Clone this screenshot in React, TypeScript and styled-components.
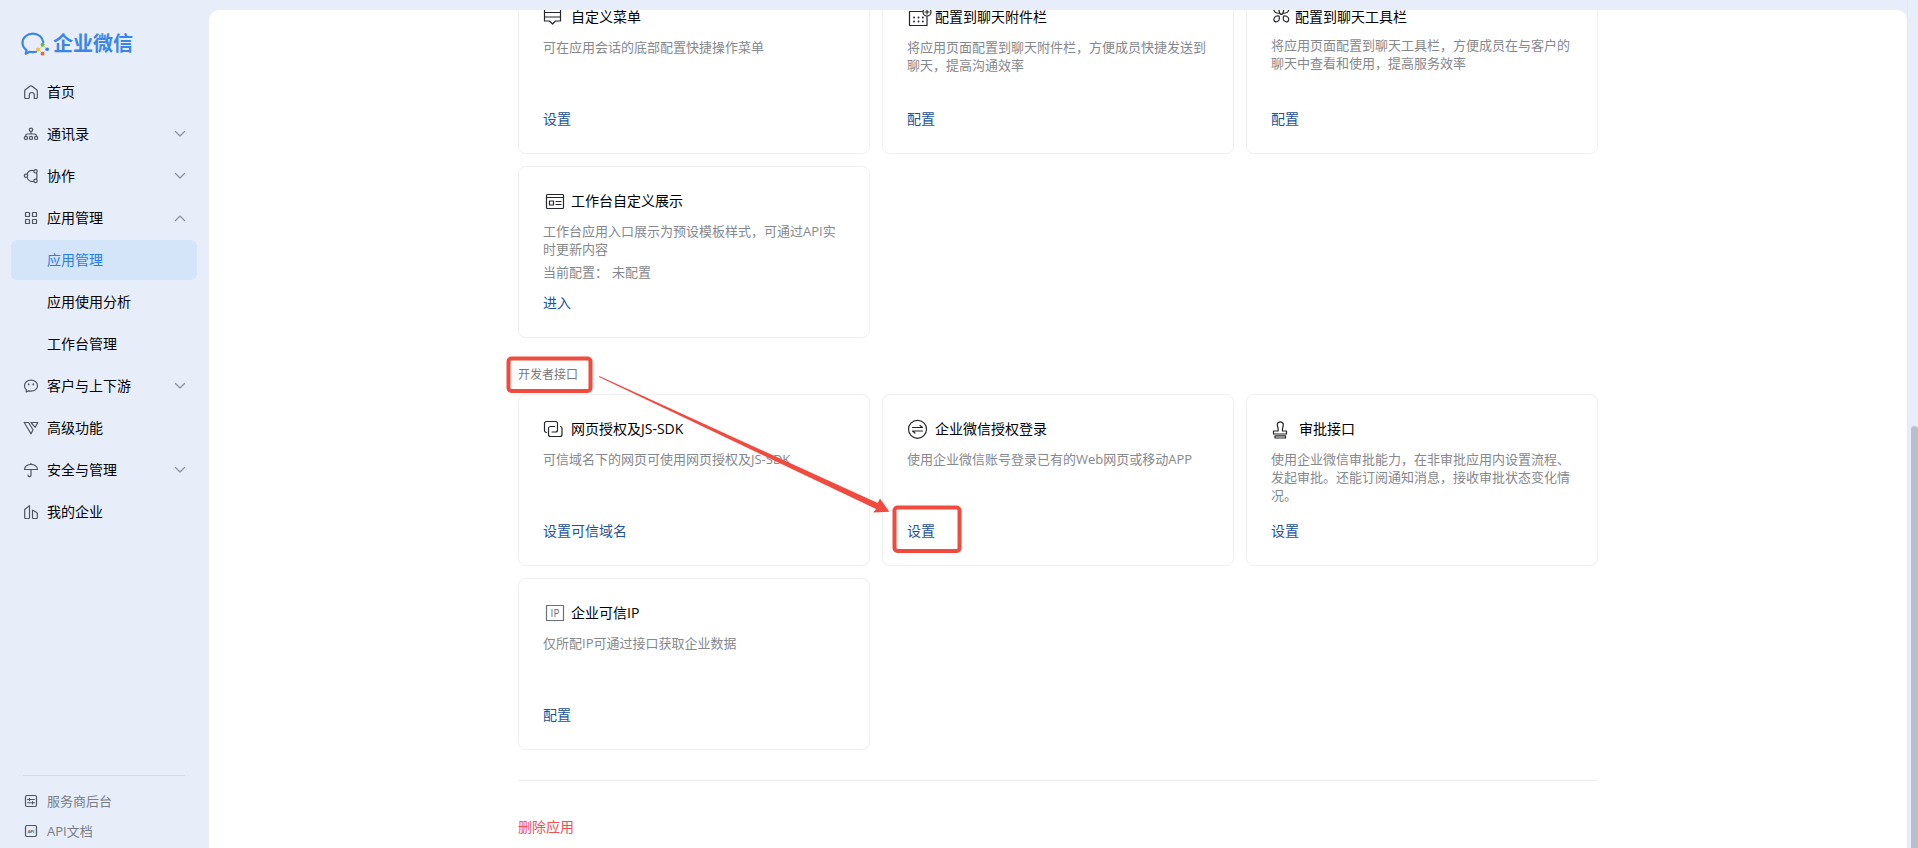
import React from 'react';
import styled, { createGlobalStyle } from 'styled-components';

const GlobalStyle = createGlobalStyle`
  * { box-sizing: border-box; }
  body {
    margin: 0;
    background: #e7eefa;
    color: #000;
    font-family: "Open Sans", "Noto Sans CJK SC", sans-serif;
    font-size: 14px;
    line-height: 20px;
  }
  button { font: inherit; color: inherit; }
`;

const Layout = styled.div`
  display: flex;
  height: 100vh;
  overflow: hidden;
`;

/* ---------- sidebar ---------- */

const Sidebar = styled.aside`
  display: flex;
  flex-direction: column;
  flex: none;
  width: 209px;
`;

const Brand = styled.a`
  display: flex;
  align-items: center;
  gap: 4px;
  height: 72px;
  padding: 15px 0 0 21px;
  color: #3b84ea;
  font-size: 20px;
  font-weight: 700;
  line-height: 28px;
  text-decoration: none;
`;

const Nav = styled.nav`
  display: flex;
  flex-direction: column;
  gap: 2px;
  padding: 0 12px 0 11px;
`;

const navRow = `
  display: flex;
  align-items: center;
  gap: 8px;
  width: 100%;
  height: 40px;
  padding: 0 12px;
  border: 0;
  border-radius: 6px;
  background: none;
  color: #000;
  text-align: left;
  text-decoration: none;
  cursor: pointer;
`;

const NavGroup = styled.button`${navRow}`;

const NavLink = styled.a<{ $active?: boolean; $nested?: boolean }>`
  ${navRow}
  ${(p) => p.$nested && 'padding-left: 36px;'}
  ${(p) => p.$active && 'background: #d4e4f9; color: #267ef0;'}
`;

const NavLabel = styled.span`
  flex: 1;
`;

const SidebarFooter = styled.div`
  display: flex;
  flex-direction: column;
  margin: auto 24px 0 23px;
  padding: 10px 0 2px;
  border-top: 1px solid #d5dce8;
`;

const FooterLink = styled.a`
  display: flex;
  align-items: center;
  gap: 8px;
  height: 30px;
  color: #787d86;
  font-size: 13px;
  text-decoration: none;
`;

const Glyph = styled.svg`
  flex: none;
  overflow: visible;
  fill: none;
  stroke: #4f555f;
  stroke-width: 1.2;
  stroke-linecap: round;
  stroke-linejoin: round;
`;

/* ---------- main panel ---------- */

const Panel = styled.main`
  flex: 1;
  min-width: 0;
  margin-top: 10px;
  overflow: hidden;
  border-radius: 10px 10px 0 0;
  background: #fff;
`;

const Content = styled.div`
  width: 100%;
  max-width: 1080px;
  margin: -28px auto 0;
`;

const CardGrid = styled.div`
  display: grid;
  grid-template-columns: repeat(3, 1fr);
  gap: 12px;
`;

const CardBox = styled.article`
  display: flex;
  flex-direction: column;
  align-items: flex-start;
  height: 172px;
  padding: 22px 24px 24px;
  border: 1px solid #eeeff0;
  border-radius: 8px;
`;

const CardTitle = styled.h3`
  display: flex;
  align-items: center;
  gap: 6px;
  height: 24px;
  margin: 0;
  font-size: 14px;
  font-weight: 400;
`;

const CardText = styled.p<{ $tight?: boolean }>`
  margin: ${(p) => (p.$tight ? 7 : 9)}px 0 0;
  color: #85888d;
  font-size: 13px;
  line-height: 18px;
`;

const CardStatus = styled.p`
  display: flex;
  gap: 4px;
  margin: 5px 0 0;
  color: #85888d;
  font-size: 13px;
  line-height: 18px;
`;

const CardLink = styled.a`
  margin-top: auto;
  color: #1d5399;
  text-decoration: none;
`;

const CardGlyph = styled(Glyph)`
  stroke: #23262b;
`;

const DeveloperSection = styled.section`
  position: relative;
  margin-top: 28px;
`;

const SectionTitle = styled.h2`
  margin: 0 0 10px;
  color: #787878;
  font-size: 12px;
  font-weight: 400;
  line-height: 18px;
`;

const Highlights = styled.svg`
  position: absolute;
  top: -16px;
  left: -18px;
  pointer-events: none;
`;

const DangerZone = styled.footer`
  display: flex;
  margin-top: 30px;
  padding: 36px 0 20px;
  border-top: 1px solid #ebecee;
`;

const DeleteButton = styled.button`
  padding: 0;
  border: 0;
  background: none;
  color: #f0504e;
  cursor: pointer;
`;

const ScrollTrack = styled.div`
  display: flex;
  flex: none;
  width: 11px;
  padding: 426px 0 0 3px;
  border-left: 1px solid #e1e8f5;
`;

const ScrollThumb = styled.div`
  flex: 1;
  border-radius: 4px 4px 0 0;
  background: #b9c0c9;
`;

/* ---------- icons ---------- */

const LogoMark = () => (
  <svg width="28" height="24" viewBox="0 0 28 24" fill="none">
    <path
      d="M22.3 10.2C21.6 5.2 17.2 1.6 12 1.6 6.2 1.6 1.5 5.6 1.500 10.800c0 3 1.500 5.600 4 7.300l-.8 3.700 3.900-2c2 .5 4.300.5 6.500 0"
      stroke="#3b84ea"
      strokeWidth="2.200"
      strokeLinejoin="round"
      strokeLinecap="round"
    />
    <path d="M22.500 13.500l3.500 3.700-4.500 4.300-4-4z" stroke="#c5d68c" strokeWidth="1" />
    <circle cx="21.500" cy="12.700" r="1.900" fill="#5cb93c" />
    <circle cx="26.200" cy="17.300" r="1.800" fill="#2f7de6" />
    <circle cx="21.500" cy="21.700" r="1.900" fill="#f0602c" />
    <circle cx="17" cy="17.500" r="1.900" fill="#fbc02d" />
  </svg>
);

const Icon16 = ({ children }: { children: React.ReactNode }) => (
  <Glyph width="16" height="16" viewBox="0 0 16 16" aria-hidden="true">{children}</Glyph>
);

const ChevronGlyph = styled(Glyph)`
  stroke: #8b919b;
`;

const Chevron = ({ up }: { up?: boolean }) => (
  <ChevronGlyph width="10" height="6" viewBox="0 0 10 6" aria-hidden="true">
    <path d={up ? 'M.5 5.500 5 1l4.500 4.500' : 'M.5.5 5 5 9.500.5'} />
  </ChevronGlyph>
);

const navIcons = {
  home: <Icon16><path d="M4.700 14.500H2.700a1 1 0 0 1-1-1V7c0-.5.2-.9.600-1.200L7.300 2a1.200 1.200 0 0 1 1.400 0l5 3.800c.4.300.6.7.6 1.200v6.500a1 1 0 0 1-1 1h-2V11a2.500 2.500 0 0 0-5 0v2.500a1 1 0 0 1-1 1z" /></Icon16>,
  contacts: (
    <Icon16>
      <circle cx="8" cy="3.800" r="1.700" />
      <path d="M8 5.500v2.500M2.700 10V9.500C2.700 8.600 3.300 8 4.200 8h7.600c.9 0 1.500.6 1.500 1.500v.5" />
      <circle cx="2.900" cy="11.900" r="1.600" /><circle cx="8" cy="11.900" r="1.600" /><circle cx="13.100" cy="11.900" r="1.600" />
    </Icon16>
  ),
  collab: (
    <Icon16>
      <circle cx="3" cy="7.800" r="1.700" /><circle cx="12.500" cy="3.300" r="1.700" /><circle cx="12.500" cy="12.900" r="1.700" />
      <path d="M4 6.200A6 6 0 0 1 10.800 2.600M4 9.400a6 6 0 0 0 6.800 4M13.600 5.200c.5 1.800.5 3.900 0 5.700" />
    </Icon16>
  ),
  apps: (
    <Icon16>
      <rect x="2.500" y="2.500" width="4" height="4" rx=".6" /><rect x="9.500" y="2.500" width="4" height="4" rx=".6" />
      <rect x="2.500" y="9.500" width="4" height="4" rx=".6" /><rect x="9.500" y="9.500" width="4" height="4" rx=".6" />
    </Icon16>
  ),
  customers: (
    <Icon16>
      <path d="M8 2.200c3.700 0 6.500 2.400 6.500 5.500S11.700 13.200 8 13.200c-.8 0-1.600-.1-2.300-.3L3.200 14l.1-2.300A5.200 5.200 0 0 1 1.500 7.700c0-3.100 2.800-5.500 6.500-5.500z" />
      <path d="M5.700 6v.7M10.300 6v.7" strokeWidth="1.600" />
    </Icon16>
  ),
  advanced: <Icon16><path d="M1.200 2.500h4.300L10 9.800l-2 4zM8 2.500h6.800L12.200 7.300zM1.200 2.500 8 13.800l2-4" /></Icon16>,
  security: <Icon16><path d="M1.500 7.500C1.700 4.500 4.500 2.300 8 2.300s6.300 2.200 6.500 5.200zM8 1.300v1M8 7.500V13c0 1-.6 1.600-1.500 1.600S5 14 5 13.200" /></Icon16>,
  company: <Icon16><path d="M2.500 14.500a.8.8 0 0 1-.8-.8V5.500L6.500 1.600v12.100c0 .5-.3.800-.8.8zM9.500 6.200l3.800 2c.6.300 1 .8 1 1.500v4c0 .5-.3.800-.8.8h-3.200a.8.8 0 0 1-.8-.8z" /></Icon16>,
};

const CardIcon = ({ width = 22, children }: { width?: number; children: React.ReactNode }) => (
  <CardGlyph width={width} height="24" viewBox={`0 0 ${width} 24`} aria-hidden="true">{children}</CardGlyph>
);

const cardIcons = {
  menu: <CardIcon><path d="M1.500 2.500h16v13.500h-5L9.500 19 6.500 16h-5zM1.500 7.500h16M1.500 12h16" /></CardIcon>,
  attach: (
    <CardIcon>
      <path d="M15.500 6.500h-13v14h17.500v-9" />
      <circle cx="20" cy="7" r="4" /><path d="M20 5v4M18 7h4" />
      <path d="M7 12.500h.1M11.500 12.500h.1M15.800 12.500h.1M7 16.500h.1M11.500 16.500h.1M15.800 16.500h.1" strokeWidth="1.800" />
    </CardIcon>
  ),
  tools: (
    <CardIcon width={18}>
      <path d="M10.300 9.500C8.500 9.500 8.500 7.500 8 5.500 7.500 3 5 1.700 3.500 3.200S3.500 7.500 6 8c2 .4 4.300.3 4.300 1.500zM10.300 9.500c1.800 0 1.800-2 2.300-4 .5-2.500 3-3.800 4.500-2.300S17.100 7.500 14.600 8c-2 .4-4.300.3-4.300 1.500zM8 11c-1.500-.3-3.500.2-4.500 1.500s-.7 3.500.6 4.100 3.300-.2 3.900-1.600c.5-1.300.4-2.700 0-4zM12.600 11c1.500-.3 3.500.2 4.500 1.500s.7 3.500-.6 4.100-3.300-.2-3.900-1.600c-.5-1.300-.4-2.700 0-4z" />
    </CardIcon>
  ),
  workbench: (
    <CardIcon>
      <rect x="3.500" y="5.500" width="17" height="14" rx="1" />
      <path d="M3.500 8.500h17M13 12.500h5M13 15.500h5" /><rect x="6.500" y="12" width="4" height="4" />
    </CardIcon>
  ),
  web: (
    <CardIcon>
      <path d="M3.500 15.500a2 2 0 0 1-2-2v-7a2 2 0 0 1 2-2h9a2 2 0 0 1 2 2v6.500a2 2 0 0 1-2 2H9" />
      <path d="M11.500 9.500H7.500a2 2 0 0 0-2 2v6a2 2 0 0 0 2 2h9.500a2 2 0 0 0 2-2v-6a2 2 0 0 0-1.500-2" />
    </CardIcon>
  ),
  login: (
    <CardIcon>
      <circle cx="10.500" cy="12.300" r="9" />
      <path d="M5.500 10.500h10L13 8.500M15.500 14h-10l2.500 2" />
    </CardIcon>
  ),
  stamp: (
    <CardIcon>
      <path d="M7.200 14c.3-3-.9-4-.9-6.800a3.100 3.100 0 0 1 6 0c0 2.800-1.200 3.800-.9 6.800h4.100v3h-13v-3zM4 18.800h10.500v2.200H4z" />
    </CardIcon>
  ),
  ip: (
    <CardIcon>
      <rect x="3.500" y="4.500" width="17" height="15" style={{ stroke: '#6b6f76' }} />
      <text x="12" y="16" textAnchor="middle" fontSize="10" fill="#6b6f76" stroke="none">IP</text>
    </CardIcon>
  ),
};

/* ---------- data ---------- */

type NavItem = { label: string; icon?: keyof typeof navIcons; toggle?: 'open' | 'closed'; active?: boolean };

const navItems: NavItem[] = [
  { label: '首页', icon: 'home' },
  { label: '通讯录', icon: 'contacts', toggle: 'closed' },
  { label: '协作', icon: 'collab', toggle: 'closed' },
  { label: '应用管理', icon: 'apps', toggle: 'open' },
  { label: '应用管理', active: true },
  { label: '应用使用分析' },
  { label: '工作台管理' },
  { label: '客户与上下游', icon: 'customers', toggle: 'closed' },
  { label: '高级功能', icon: 'advanced' },
  { label: '安全与管理', icon: 'security', toggle: 'closed' },
  { label: '我的企业', icon: 'company' },
];

type CardData = {
  title: string;
  icon: keyof typeof cardIcons;
  text: string;
  action: string;
  status?: [string, string];
  tight?: boolean;
};

const featureCards: CardData[] = [
  { title: '自定义菜单', icon: 'menu', text: '可在应用会话的底部配置快捷操作菜单', action: '设置' },
  { title: '配置到聊天附件栏', icon: 'attach', text: '将应用页面配置到聊天附件栏，方便成员快捷发送到聊天，提高沟通效率', action: '配置' },
  { title: '配置到聊天工具栏', icon: 'tools', text: '将应用页面配置到聊天工具栏，方便成员在与客户的聊天中查看和使用，提高服务效率', action: '配置', tight: true },
  { title: '工作台自定义展示', icon: 'workbench', text: '工作台应用入口展示为预设模板样式，可通过API实时更新内容', action: '进入', status: ['当前配置：', '未配置'] },
];

const developerCards: CardData[] = [
  { title: '网页授权及JS-SDK', icon: 'web', text: '可信域名下的网页可使用网页授权及JS-SDK', action: '设置可信域名' },
  { title: '企业微信授权登录', icon: 'login', text: '使用企业微信账号登录已有的Web网页或移动APP', action: '设置' },
  { title: '审批接口', icon: 'stamp', text: '使用企业微信审批能力，在非审批应用内设置流程、发起审批。还能订阅通知消息，接收审批状态变化情况。', action: '设置' },
  { title: '企业可信IP', icon: 'ip', text: '仅所配IP可通过接口获取企业数据', action: '配置' },
];

const Card = ({ data }: { data: CardData }) => (
  <CardBox>
    <CardTitle>{cardIcons[data.icon]}{data.title}</CardTitle>
    <CardText $tight={data.tight}>{data.text}</CardText>
    {data.status && <CardStatus><span>{data.status[0]}</span><span>{data.status[1]}</span></CardStatus>}
    <CardLink href="#">{data.action}</CardLink>
  </CardBox>
);

export default function App() {
  return (
    <>
      <GlobalStyle />
      <Layout>
        <Sidebar>
          <Brand href="#"><LogoMark />企业微信</Brand>
          <Nav>
            {navItems.map((item, i) =>
              item.toggle ? (
                <NavGroup key={i} type="button" aria-expanded={item.toggle === 'open'}>
                  {item.icon && navIcons[item.icon]}
                  <NavLabel>{item.label}</NavLabel>
                  <Chevron up={item.toggle === 'open'} />
                </NavGroup>
              ) : (
                <NavLink key={i} href="#" $active={item.active} $nested={!item.icon}>
                  {item.icon && navIcons[item.icon]}
                  <NavLabel>{item.label}</NavLabel>
                </NavLink>
              ),
            )}
          </Nav>
          <SidebarFooter>
            <FooterLink href="#">
              <Icon16>
                <rect x="2.500" y="2.500" width="11" height="11" rx="1.500" />
                <path d="M4.500 6.500h7M4.500 9.800h7M6.500 5.200v2.600M9.500 8.500v2.600" strokeWidth="1" />
              </Icon16>
              服务商后台
            </FooterLink>
            <FooterLink href="#">
              <Icon16>
                <rect x="2.500" y="2.500" width="11" height="11" rx="1.500" />
                <text x="8" y="9.800" textAnchor="middle" fontSize="4" fontWeight="700" fill="#4f555f" stroke="none">API</text>
              </Icon16>
              API文档
            </FooterLink>
          </SidebarFooter>
        </Sidebar>
        <Panel>
          <Content>
            <CardGrid>{featureCards.map((c) => <Card key={c.title} data={c} />)}</CardGrid>
            <DeveloperSection>
              <SectionTitle>开发者接口</SectionTitle>
              <CardGrid>{developerCards.map((c) => <Card key={c.title} data={c} />)}</CardGrid>
              <Highlights width="470" height="210" viewBox="0 0 470 210" fill="none" aria-hidden="true">
                <rect x="8.500" y="8.500" width="82" height="32.500" rx="3" stroke="#f04b3e" strokeWidth="4" />
                <rect x="394.500" y="157.500" width="65" height="43.500" rx="3" stroke="#f04b3e" strokeWidth="4" />
                <path d="M99.300 26 377.700 153l2.300-4.500 9.300 13.200-16 .8 2.700-3.500L99 27z" fill="#f04b3e" />
              </Highlights>
            </DeveloperSection>
            <DangerZone><DeleteButton type="button">删除应用</DeleteButton></DangerZone>
          </Content>
        </Panel>
        <ScrollTrack><ScrollThumb /></ScrollTrack>
      </Layout>
    </>
  );
}
